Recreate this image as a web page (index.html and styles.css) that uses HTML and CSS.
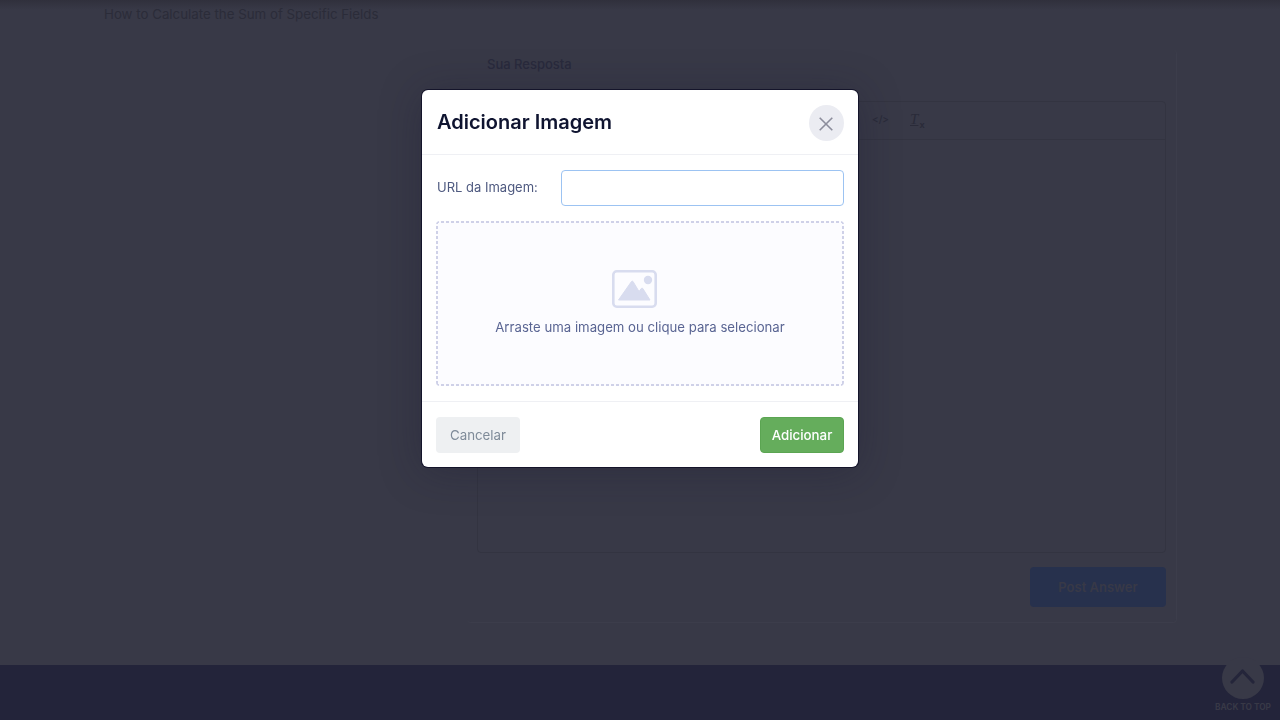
FILE: index.html
```html
<!DOCTYPE html>
<html lang="pt">
<head>
<meta charset="utf-8">
<title>Adicionar Imagem</title>
<link rel="stylesheet" href="styles.css">
</head>
<body>
<div class="page">
  <main class="content">
    <div class="question-title">How to Calculate the Sum of Specific Fields</div>
    <section class="answer">
      <h2 class="answer-label">Sua Resposta</h2>
      <div class="editor">
        <div class="toolbar">
          <span class="code-tool">&lt;/&gt;</span>
          <span class="clear-tool"><span class="clear-t">T</span><span class="clear-x">x</span></span>
        </div>
      </div>
      <div class="answer-actions"><button class="post-btn">Post Answer</button></div>
    </section>
  </main>
  <footer class="footer">
    <div class="back-top">
      <span class="back-circle">
        <svg width="25" height="16" viewBox="0 0 25 16"><path d="M2 14 L12.5 3 L23 14" fill="none" stroke="#24253a" stroke-width="3.2" stroke-linecap="round" stroke-linejoin="round"/></svg>
      </span>
      <span class="back-text">BACK TO TOP</span>
    </div>
  </footer>
</div>

<div class="overlay">
  <div class="modal">
    <header class="modal-head">
      <h1 class="modal-title">Adicionar Imagem</h1>
      <button class="close-btn" aria-label="Fechar">
        <svg width="14" height="14" viewBox="0 0 14 14"><path d="M0.7 0.7 L13.3 13.3 M13.3 0.7 L0.7 13.3" fill="none" stroke="#8c8d9c" stroke-width="1.6"/></svg>
      </button>
    </header>
    <div class="modal-body">
      <div class="url-row">
        <label class="url-label">URL da Imagem:</label>
        <input class="url-input" type="text">
      </div>
      <div class="dropzone">
        <svg class="drop-icon" width="45" height="38" viewBox="0 0 45 38">
          <rect x="1.3" y="1.3" width="42.4" height="35.4" rx="3.5" fill="none" stroke="#d8dcef" stroke-width="2.6"/>
          <circle cx="36" cy="10" r="4.2" fill="#d8dcef"/>
          <path d="M6.5 30 L19.5 11.5 Q20.2 10.8 21 11.5 L27 21.5 L29.3 18.5 Q30 17.8 30.8 18.5 L38 30 Z" fill="#d8dcef" stroke="#d8dcef" stroke-linejoin="round"/>
        </svg>
        <p class="drop-text">Arraste uma imagem ou clique para selecionar</p>
      </div>
    </div>
    <footer class="modal-foot">
      <button class="btn btn-cancel">Cancelar</button>
      <button class="btn btn-add">Adicionar</button>
    </footer>
  </div>
</div>
</body>
</html>
```

FILE: styles.css
```css
* { box-sizing: border-box; }
html, body { margin: 0; height: 100%; overflow: hidden; }
body { font-family: Inter, "Noto Sans", sans-serif; background: #383947; }

.page { height: 720px; display: flex; flex-direction: column; background: linear-gradient(#30303c 0, #383947 10px); }
.content { flex: 1; padding: 0 103px 0 104px; min-height: 0; }
.question-title { font-size: 13.3px; line-height: 29px; color: #2b2c39; }
.answer { margin: 21px 0 0 363px; padding: 0 10px 15px; border-right: 1px solid #3c3d4b; border-bottom: 1px solid #3c3d4b; border-radius: 4px; }
.answer-label { margin: 0 0 0 10px; font-size: 13px; line-height: 28px; font-weight: 500; color: #292a3c; }
.editor { margin-top: 23px; height: 452px; border: 1px solid #333441; border-radius: 4px; }
.toolbar { height: 38px; border-bottom: 1px solid #333441; display: flex; align-items: center; padding: 0 0 3px 394px; gap: 20px; color: #2a2b39; }
.code-tool { font-size: 10px; font-weight: 500; }
.clear-tool { display: flex; align-items: flex-end; }
.clear-t { font-size: 15px; font-family: "Liberation Serif", serif; font-style: italic; text-decoration: underline; padding: 0 1px; }
.clear-x { font-size: 9px; font-weight: 700; margin-bottom: -2px; }
.answer-actions { display: flex; justify-content: flex-end; margin-top: 14px; }
.post-btn { width: 136px; height: 40px; border: 0; border-radius: 4px; background: #27314d; color: #383947; font: 600 13px Inter, sans-serif; }

.footer { height: 55px; background: #23243a; display: flex; justify-content: flex-end; padding-right: 9px; }
.back-top { display: flex; flex-direction: column; align-items: center; margin-top: -8px; gap: 2px; }
.back-circle { width: 42px; height: 42px; border-radius: 50%; background: #383947; display: flex; align-items: center; justify-content: center; padding-bottom: 5px; }
.back-text { font-size: 8.3px; line-height: 12px; font-weight: 700; color: #383947; }

.overlay { position: fixed; inset: 0; display: flex; justify-content: center; align-items: flex-start; padding-top: 90px; }
.modal { width: 436px; height: 377px; background: #fff; border-radius: 6px; box-shadow: 0 0 0 1px #14142a, 0 4px 40px rgba(25, 25, 50, 0.35); display: flex; flex-direction: column; }
.modal-head { height: 65px; padding: 0 14px 0 15px; border-bottom: 1px solid #eff0f4; display: flex; align-items: center; justify-content: space-between; }
.modal-title { margin: 0; font-size: 20px; font-weight: 600; color: #0f1430; }
.close-btn { width: 35px; height: 36px; border: 0; border-radius: 50%; background: #ebecf2; display: flex; align-items: center; justify-content: center; padding: 2px 2px 0 0; margin-top: 2px; }
.modal-body { flex: 1; padding: 15px 14px; display: flex; flex-direction: column; gap: 15px; }
.url-row { display: flex; align-items: center; justify-content: space-between; }
.url-label { font-size: 13px; line-height: 34px; color: #4f5a80; margin: 0 0 2px 1px; }
.url-input { width: 283px; height: 36px; border: 1px solid #9cc3f2; border-radius: 4px; background: #fff; outline: 0; }
.dropzone {
  flex: 1; border-radius: 4px; background-color: #fcfcff; display: flex; flex-direction: column; align-items: center; padding-top: 49px;
  background-image:
    linear-gradient(90deg, #cfd1e8 60%, transparent 0), linear-gradient(90deg, #cfd1e8 60%, transparent 0),
    linear-gradient(#cfd1e8 60%, transparent 0), linear-gradient(#cfd1e8 60%, transparent 0);
  background-size: 5px 2px, 5px 2px, 2px 5px, 2px 5px;
  background-position: 0 0, 0 100%, 0 0, 100% 0;
  background-repeat: repeat-x, repeat-x, repeat-y, repeat-y;
}
.drop-icon { display: block; margin-right: 11px; }
.drop-text { margin: 9px 0 0; font-size: 13.2px; line-height: 20px; color: #5a6593; }
.modal-foot { height: 66px; border-top: 1px solid #eff0f4; padding: 0 14px; display: flex; align-items: center; justify-content: space-between; }
.btn { height: 36px; border-radius: 4px; font: 400 13.3px Inter, sans-serif; }
.btn-cancel { width: 84px; border: 0; background: #eef0f2; color: #7f8b99; }
.btn-add { width: 84px; border: 1px solid #5ba552; background: #65ad5c; color: #fff; font-weight: 500; }
```
